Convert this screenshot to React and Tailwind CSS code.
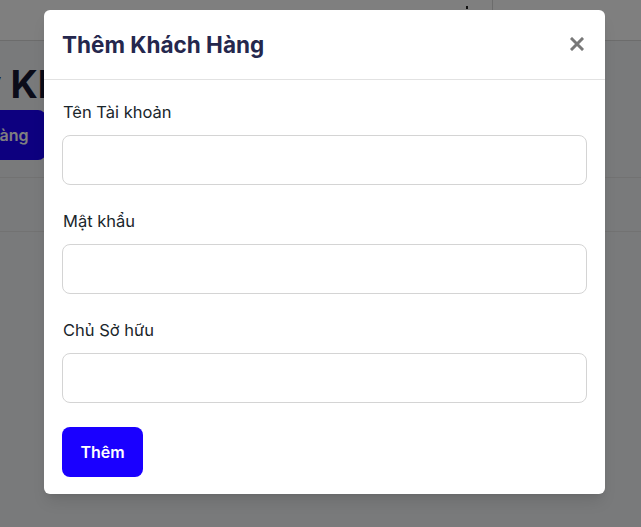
import React from "react";

export default function App() {
  return (
    <div className="relative w-[641px] h-[527px] overflow-hidden bg-gray-100" style={{ fontFamily: "Inter, 'Noto Sans', sans-serif" }}>
      {/* background page */}
      <div className="flex h-[41px] bg-white border-b border-[#d8d8d8]">
        <div className="flex-1 flex justify-end items-start pr-[24px]">
          <span className="mt-[6px] w-[2px] h-[3px] bg-[#222]" />
        </div>
        <div className="w-[149px] border-l border-[#d8d8d8]" />
      </div>
      <div className="-ml-[131px] pt-[20px]">
        <h1 className="-ml-[9px] text-[38px] leading-[46px] font-bold text-[#161833] whitespace-nowrap">Quản lý Khách Hàng</h1>
        <button className="mt-[3px] h-[50px] px-[17px] rounded-[8px] bg-[#1a00ff] text-white text-[16px] font-semibold whitespace-nowrap">Thêm Khách Hàng</button>
      </div>
      <div className="mt-[17px] h-[55px] border-t border-b border-[#e5e5e5]" />

      {/* overlay */}
      <div className="absolute inset-0 bg-black/50">
        <div className="ml-[44px] mt-[10px] w-[561px] bg-white rounded-[6px] shadow-lg">
          <div className="h-[70px] flex items-center justify-between pl-[18px] pr-[21px] border-b border-[#e2e2e2]">
            <h2 className="text-[22.5px] font-bold text-[#25274d] leading-[28px]">Thêm Khách Hàng</h2>
            <svg width="14" height="14" viewBox="0 0 14 14" className="mt-[-1px]">
              <path d="M2 2 L12 12 M12 2 L2 12" stroke="#787878" strokeWidth="3" strokeLinecap="square" />
            </svg>
          </div>
          <div className="px-[18px] pt-[20px] pb-[17px]">
            {["Tên Tài khoản", "Mật khẩu", "Chủ Sở hữu"].map((l) => (
              <div key={l} className="mb-[24px]">
                <label className="block text-[16.5px] leading-[24px] text-[#1a262b] mb-[11px] ml-[1px]">{l}</label>
                <input className="block w-full h-[50px] rounded-[8px] border border-[#d4d4d4] bg-white outline-none" />
              </div>
            ))}
            <button className="h-[50px] w-[81px] rounded-[8px] bg-[#1a00ff] text-white text-[16px] font-semibold">Thêm</button>
          </div>
        </div>
      </div>
    </div>
  );
}
